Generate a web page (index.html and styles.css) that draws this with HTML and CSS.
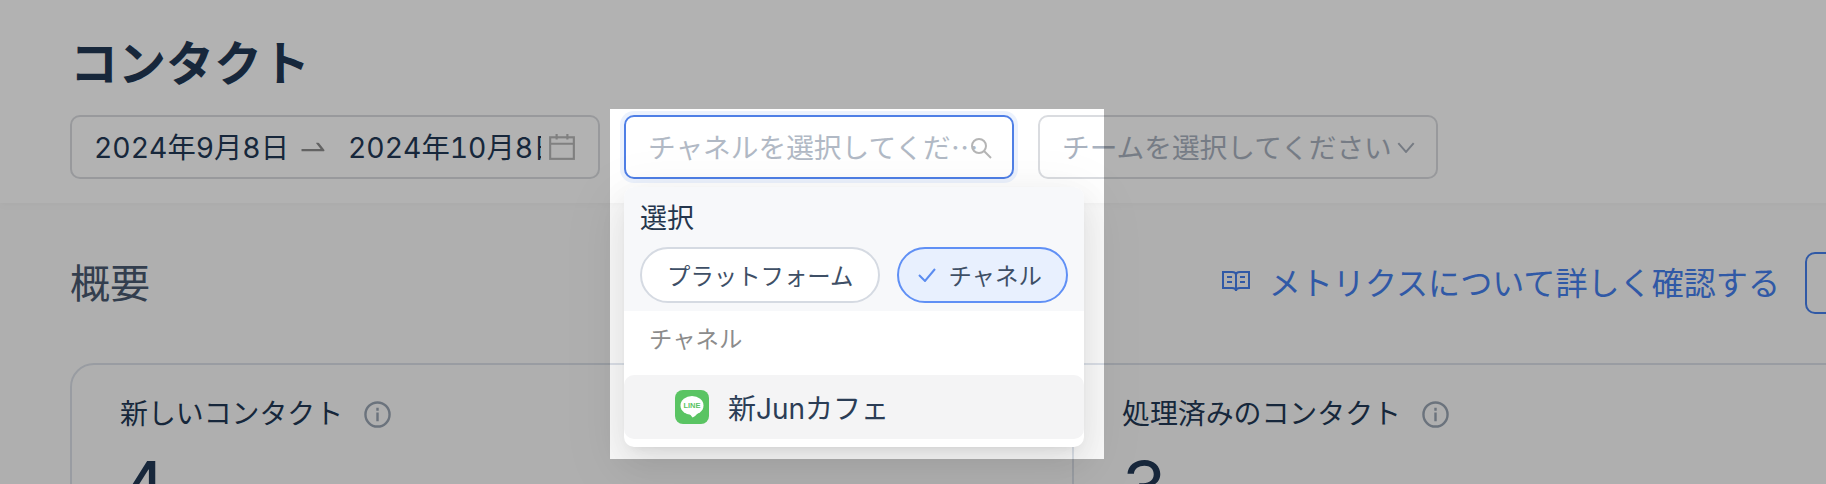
FILE: index.html
```html
<!DOCTYPE html>
<html lang="ja">
<head>
    <meta charset="UTF-8">
    <meta name="viewport" content="width=device-width, initial-scale=1.0">
    <title>コンタクト</title>
    <link rel="stylesheet" href="styles.css">
</head>
<body>
    <div class="page">
        <header class="page-header">
            <h1>コンタクト</h1>
            <div class="filters">
                <div class="date-range">
                    <span class="date-value">2024年9月8日</span>
                    <svg class="date-arrow" viewBox="0 0 1024 1024" fill="#8f8f8f"><path d="M873.1 596.2l-164-208A32 32 0 0 0 684 376h-64.8c-6.7 0-10.4 7.7-6.3 13l144.3 183H152c-4.4 0-8 3.6-8 8v60c0 4.4 3.6 8 8 8h695.9c26.8 0 41.7-30.8 25.2-51.8z"/></svg>
                    <span class="date-value date-end">2024年10月8日</span>
                    <svg class="date-icon" viewBox="0 0 26 26" fill="none" stroke="#b8b8b8" stroke-width="2"><rect x="2" y="4" width="22" height="20"/><path d="M2 10h22M8 1v5M18 1v5"/></svg>
                </div>
                <div class="select-wrap">
                    <div class="select select-focus">
                        <span class="select-text">チャネルを選択してください</span>
                        <svg class="search-icon" viewBox="0 0 22 22" fill="none" stroke="#b5b5b5" stroke-width="2"><circle cx="9" cy="9" r="7"/><path d="M14 14l7 7"/></svg>
                    </div>
                    <div class="dropdown">
                        <div class="dropdown-head">
                            <div class="dropdown-title">選択</div>
                            <div class="chips">
                                <span class="chip">プラットフォーム</span>
                                <span class="chip chip-on">
                                    <svg class="chip-check" viewBox="0 0 18 14" fill="none" stroke="#5b8cf0" stroke-width="2"><path d="M1 7l6 6L17 1"/></svg>
                                    チャネル
                                </span>
                            </div>
                        </div>
                        <div class="dropdown-label">チャネル</div>
                        <div class="dropdown-row">
                            <svg class="line-icon" viewBox="0 0 34 34">
                                <rect width="34" height="34" rx="8" fill="#5ac463"/>
                                <ellipse cx="17" cy="15.500" rx="11.500" ry="9.500" fill="#fff"/>
                                <path d="M14 23l3.500 4.500c2-1 4-2.500 5-4.500z" fill="#fff"/>
                                <text class="line-text" x="17" y="18.200" text-anchor="middle">LINE</text>
                            </svg>
                            <span>新Junカフェ</span>
                        </div>
                    </div>
                </div>
                <div class="select select-team">
                    <span class="team-text">チームを選択してください</span>
                    <svg class="chevron" viewBox="0 0 16 10" fill="none" stroke="#a9b1bc" stroke-width="1.800"><path d="M1 1l7 8 7-8"/></svg>
                </div>
            </div>
        </header>

        <main class="content">
            <div class="overview-head">
                <h2>概要</h2>
                <a class="doc-link">
                    <svg class="book-icon" viewBox="0 0 28 22" fill="none" stroke="#4680ee" stroke-width="2"><path d="M1 2h9c2 0 4 1 4 3v16c0-2-2-3-4-3H1zM27 2h-9c-2 0-4 1-4 3v16c0-2 2-3 4-3h9zM5 7h5M5 12h5M18 7h5M18 12h5"/></svg>
                    メトリクスについて詳しく確認する
                </a>
                <button class="export-btn"></button>
            </div>
            <div class="stats">
                <div class="stat">
                    <div class="stat-title">新しいコンタクト
                        <svg class="info-icon" viewBox="0 0 28 28" fill="none" stroke="#9aa5b3" stroke-width="2.500"><circle cx="14" cy="14" r="12.500"/><path d="M14 12v9M14 7v3"/></svg>
                    </div>
                    <div class="stat-num">4</div>
                </div>
                <div class="stat">
                    <div class="stat-title">処理済みのコンタクト
                        <svg class="info-icon" viewBox="0 0 28 28" fill="none" stroke="#9aa5b3" stroke-width="2.500"><circle cx="14" cy="14" r="12.500"/><path d="M14 12v9M14 7v3"/></svg>
                    </div>
                    <div class="stat-num">3</div>
                </div>
                <div class="stat"></div>
            </div>
        </main>
    </div>

    <!-- onboarding spotlight: the hole shows the page, the shadow dims the rest -->
    <div class="spotlight"></div>
</body>
</html>
```

FILE: styles.css
```css
html, body {
    margin: 0;
    height: 484px;
    overflow: hidden;
}
body {
    font-family: Inter, "Noto Sans CJK JP", sans-serif;
    color: #223855;
    background-color: #fbfbfb;
}
.page {
    width: 2400px;
}
.page-header {
    height: 203px;
    box-sizing: border-box;
    padding: 30px 70px 0;
    background-color: #fff;
    box-shadow: 0 2px 8px rgba(0, 0, 0, 0.03);
}
h1 {
    margin: 0 0 17px;
    font-size: 48px;
    line-height: 68px;
    font-weight: 700;
}
.filters {
    display: flex;
    gap: 24px;
}
.date-range {
    width: 530px;
    height: 64px;
    box-sizing: border-box;
    display: flex;
    align-items: center;
    padding: 0 0 3px 22px;
    border: 2px solid #dadce0;
    border-radius: 10px;
    font-size: 28.3px;
    font-variant-numeric: tabular-nums;
    white-space: nowrap;
}
.date-value {
    width: 203px;
    flex-shrink: 0;
}
.date-end {
    width: 193px;
    overflow: hidden;
}
.date-arrow {
    width: 32px;
    height: 32px;
    flex-shrink: 0;
    margin: 3px 19px 0 0;
}
.date-icon {
    width: 28px;
    height: 28px;
    margin: 3px 0 0 7px;
}
.select-wrap {
    position: relative;
}
.select {
    height: 64px;
    box-sizing: border-box;
    display: flex;
    align-items: center;
    padding-bottom: 3px;
    border: 2px solid #dadce0;
    border-radius: 10px;
    font-size: 27.7px;
    color: #b1b9c5;
    white-space: nowrap;
}
.select-focus {
    position: relative;
    width: 390px;
    padding-left: 22px;
    border-color: #4f7fe6;
    background-color: #fff;
    box-shadow: 0 0 0 4px rgba(70, 128, 238, 0.1);
}
.select-text {
    width: 332px;
    overflow: hidden;
    text-overflow: ellipsis;
    font-family: "Noto Sans CJK JP", sans-serif;
}
.search-icon {
    position: absolute;
    left: 344px;
    top: 20px;
    width: 22px;
    height: 22px;
}
.select-team {
    width: 400px;
    padding-left: 22px;
    color: #a9b2bf;
}
.team-text {
    width: 335px;
}
.chevron {
    width: 18px;
    height: 11px;
    margin-top: 3px;
}
.dropdown {
    position: absolute;
    top: 72px;
    left: 0;
    width: 460px;
    height: 260px;
    background-color: #fff;
    border-radius: 10px;
    box-shadow: 0 12px 32px rgba(0, 0, 0, 0.08), 0 6px 12px -8px rgba(0, 0, 0, 0.12), 0 18px 56px 16px rgba(0, 0, 0, 0.05);
}
.dropdown-head {
    height: 124px;
    box-sizing: border-box;
    padding: 14px 16px 0;
    background-color: #f7f8fa;
    border-radius: 10px 10px 0 0;
}
.dropdown-title {
    font-size: 27px;
    line-height: 36px;
    color: #25364d;
}
.chips {
    display: flex;
    gap: 17px;
    margin-top: 10px;
}
.chip {
    height: 56px;
    box-sizing: border-box;
    flex-shrink: 0;
    display: flex;
    align-items: center;
    padding: 0 25px;
    border: 2px solid #d5dae2;
    border-radius: 28px;
    background-color: #fff;
    font-size: 23.4px;
    color: #3e4f66;
    white-space: nowrap;
}
.chip-on {
    padding: 0 24px 0 19px;
    border-color: #6090f5;
    background-color: #e8f0fe;
}
.chip-check {
    width: 18px;
    height: 14px;
    margin-right: 12px;
}
.dropdown-label {
    padding: 11px 25px 0;
    font-size: 23.4px;
    line-height: 36px;
    color: #8c8c8c;
}
.dropdown-row {
    height: 64px;
    margin-top: 17px;
    display: flex;
    align-items: center;
    gap: 19px;
    padding-left: 51px;
    background-color: #f4f4f5;
    border-radius: 10px;
    font-size: 28px;
    color: #2b3d55;
}
.line-icon {
    width: 34px;
    height: 34px;
}
.line-text {
    font-family: "Liberation Sans", sans-serif;
    font-size: 7.5px;
    font-weight: 700;
    fill: #5ac463;
}
.content {
    padding: 49px 70px 0;
}
.overview-head {
    width: 1875px;
    height: 62px;
    display: flex;
    align-items: center;
}
h2 {
    margin: 0 0 4px;
    font-size: 40px;
    font-weight: 400;
    color: #4a5a70;
}
.doc-link {
    margin: 0 0 4px auto;
    display: flex;
    align-items: center;
    font-size: 32.1px;
    color: #4680ee;
}
.book-icon {
    width: 28px;
    height: 22px;
    margin-right: 19px;
}
.export-btn {
    width: 140px;
    height: 62px;
    margin-left: 25px;
    background: none;
    border: 2px solid #4680ee;
    border-radius: 10px;
}
.stats {
    display: grid;
    grid-template-columns: repeat(3, 1002px);
    width: 3006px;
    margin-top: 49px;
    border: 2px solid #dbe0e8;
    border-radius: 24px;
}
.stat {
    height: 300px;
    box-sizing: border-box;
    padding: 29px 48px 0;
    border-right: 2px solid #dbe0e8;
}
.stat-title {
    display: flex;
    align-items: center;
    gap: 21px;
    font-size: 27.9px;
    line-height: 40px;
}
.info-icon {
    width: 27px;
    height: 27px;
}
.stat-num {
    margin-top: 9px;
    font-size: 72px;
    line-height: 88px;
}
.spotlight {
    position: absolute;
    left: 610px;
    top: 109px;
    width: 494px;
    height: 350px;
    box-shadow: 0 0 0 3000px rgba(0, 0, 0, 0.3);
    pointer-events: none;
}
```
